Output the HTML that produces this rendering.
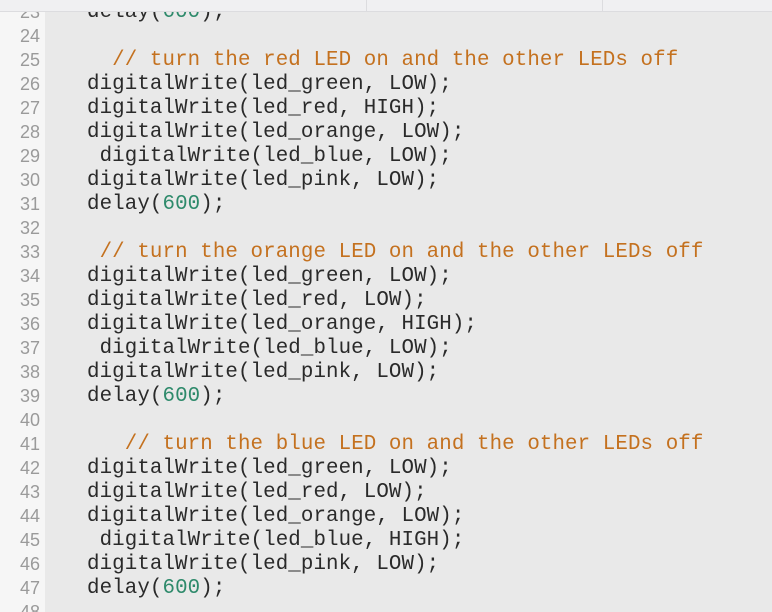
<!DOCTYPE html>
<html style="overflow:hidden"><head><style>
html,body{margin:0;width:772px;height:612px;overflow:hidden}
body{background:#e9e9e9;position:relative}
#top{position:absolute;left:0;top:0;width:772px;height:11px;background:#f0f0f2;border-bottom:1px solid #dcdcdf;z-index:2}
#top i{position:absolute;top:0;width:1px;height:11px;background:#dcdcdf}
#gut{position:absolute;left:0;top:0;width:45px;height:612px;background:#f6f6f6}
#code{position:absolute;left:0;top:0;width:772px;height:612px;overflow:hidden}
.l{position:absolute;left:0;height:24px;line-height:24px;white-space:pre;width:772px}
.n{position:absolute;left:0;width:40px;text-align:right;font:18px "Liberation Sans",sans-serif;color:#9a9a9a;top:1px}
.c{position:absolute;left:87px;font:20.8px "Liberation Mono",monospace;color:#2a2a2a;letter-spacing:0.1px}
.k{color:#c4711f}.d{color:#2e8a6b}
</style></head><body>
<div id="gut"></div>
<div id="code"></div>
<div id="top"><i style="left:366px"></i><i style="left:602px"></i></div>
<script>
var L=[
[23,'delay(<span class=d>600</span>);'],
[24,''],
[25,'  <span class=k>// turn the red LED on and the other LEDs off</span>'],
[26,'digitalWrite(led_green, LOW);'],
[27,'digitalWrite(led_red, HIGH);'],
[28,'digitalWrite(led_orange, LOW);'],
[29,' digitalWrite(led_blue, LOW);'],
[30,'digitalWrite(led_pink, LOW);'],
[31,'delay(<span class=d>600</span>);'],
[32,''],
[33,' <span class=k>// turn the orange LED on and the other LEDs off</span>'],
[34,'digitalWrite(led_green, LOW);'],
[35,'digitalWrite(led_red, LOW);'],
[36,'digitalWrite(led_orange, HIGH);'],
[37,' digitalWrite(led_blue, LOW);'],
[38,'digitalWrite(led_pink, LOW);'],
[39,'delay(<span class=d>600</span>);'],
[40,''],
[41,'   <span class=k>// turn the blue LED on and the other LEDs off</span>'],
[42,'digitalWrite(led_green, LOW);'],
[43,'digitalWrite(led_red, LOW);'],
[44,'digitalWrite(led_orange, LOW);'],
[45,' digitalWrite(led_blue, HIGH);'],
[46,'digitalWrite(led_pink, LOW);'],
[47,'delay(<span class=d>600</span>);'],
[48,'']];
var h='';
L.forEach(function(x,i){h+='<div class=l style="top:'+(1+i*24)+'px"><span class=n>'+x[0]+'</span><span class=c>'+x[1]+'</span></div>';});
document.getElementById('code').innerHTML=h;
</script>
</body></html>
